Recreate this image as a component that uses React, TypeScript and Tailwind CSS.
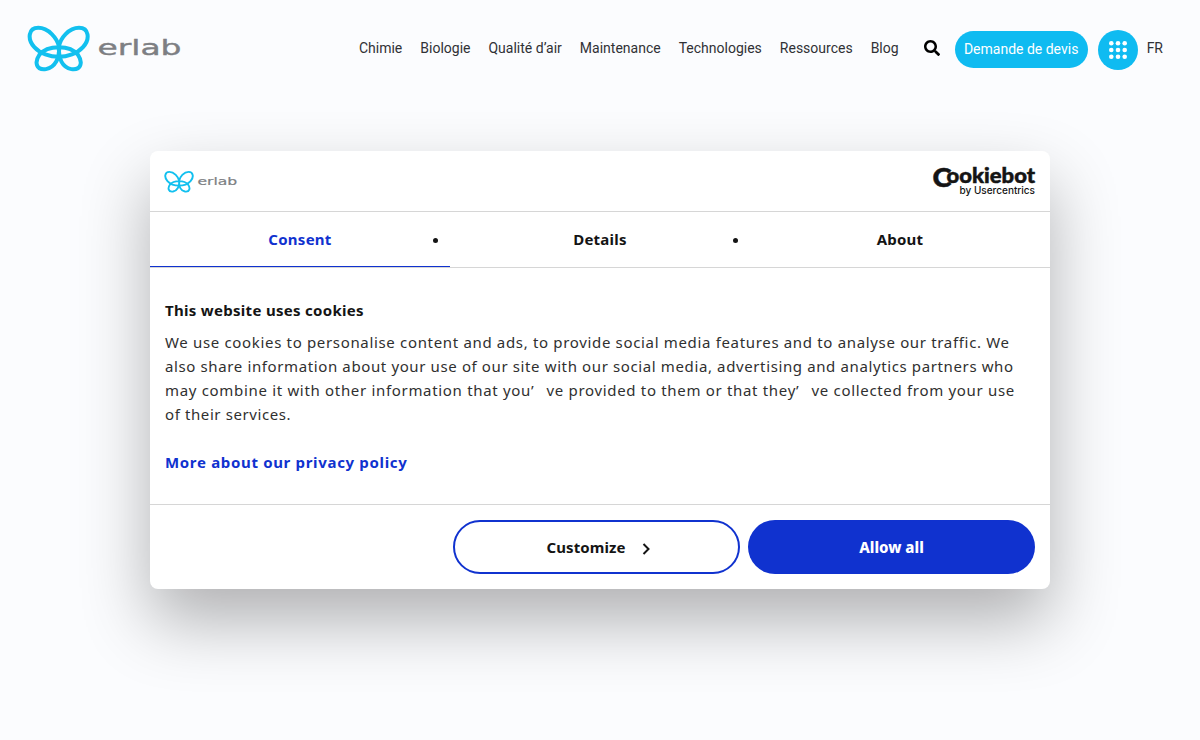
import { FaSearch } from "react-icons/fa";

const navItems = [
  "Chimie",
  "Biologie",
  "Qualité d’air",
  "Maintenance",
  "Technologies",
  "Ressources",
  "Blog",
];

function ErlabLogo({ className }: { className: string }) {
  return (
    <svg viewBox="0 0 156 48" className={className} aria-label="erlab">
      <g
        transform="translate(-7 -9.2) scale(0.3333)"
        fill="none"
        stroke="#12c0ef"
        strokeWidth="12"
        strokeLinejoin="round"
      >
        <path d="M117 96C112 70 85 39 55 39C25 39 21 73 43 97C60 116 90 126 116 126C142 126 172 116 189 97C211 73 207 39 177 39C147 39 120 70 117 96Z" />
        <path d="M117 96C120 130 105 158 78 163C48 167 43 142 58 120C72 102 95 97 117 97C139 97 160 102 174 120C189 142 184 167 154 163C127 158 114 130 117 96Z" />
      </g>
      <text
        x="70.5"
        y="31"
        fontSize="22"
        textLength="84"
        lengthAdjust="spacingAndGlyphs"
        strokeWidth="0.4"
        className="fill-[#7d7f83] stroke-[#7d7f83] font-['DejaVu_Sans',sans-serif]"
      >
        erlab
      </text>
    </svg>
  );
}

function CookiebotLogo() {
  return (
    <svg viewBox="0 0 104 32" className="h-8 w-26 overflow-visible fill-[#141414]">
      <g className="stroke-[#141414] font-['Lato',sans-serif] font-black" strokeWidth="0.5">
        <text x="0.5" y="21.8" fontSize="26.5" textLength="19" lengthAdjust="spacingAndGlyphs">
          C
        </text>
        <text x="14.5" y="17.8" fontSize="21.5" textLength="88.5" lengthAdjust="spacingAndGlyphs">
          ookiebot
        </text>
      </g>
      <text
        x="27.5"
        y="28.5"
        fontSize="10"
        textLength="75.5"
        lengthAdjust="spacingAndGlyphs"
        className="font-['Inter',sans-serif] font-medium"
      >
        by Usercentrics
      </text>
    </svg>
  );
}

function Header() {
  return (
    <header className="flex h-24 items-center pr-[37px] pl-[27px] font-['Roboto',sans-serif] text-sm text-[#303135]">
      <ErlabLogo className="h-12 w-[156px]" />
      <nav className="ml-auto flex gap-[18px]">
        {navItems.map((item) => (
          <a key={item}>{item}</a>
        ))}
      </nav>
      <FaSearch size={16} className="ml-[25px] text-black" />
      <button className="ml-[15px] mt-0.5 h-[37px] w-[133px] rounded-full bg-[#0fbbf1] text-white">
        Demande de devis
      </button>
      <button className="ml-2.5 mt-1 flex size-10 items-center justify-center rounded-full bg-[#0fbbf1]">
        <svg width="18" height="18" viewBox="0 0 18 18" fill="white">
          {[2.3, 9, 15.7].map((y) =>
            [2.3, 9, 15.7].map((x) => <circle key={`${x}-${y}`} cx={x} cy={y} r="2.3" />)
          )}
        </svg>
      </button>
      <span className="ml-[9px]">FR</span>
    </header>
  );
}

function Apostrophe() {
  return <span className="inline-block w-[15.5px]">’</span>;
}

function Tabs() {
  return (
    <div className="grid h-14 grid-cols-3 border-b border-[#d6d6d6] text-center font-bold tracking-[0.25px]">
      <div className="relative border-b border-b-[#1032cf] pt-[15px] text-[#1032cf]">
        Consent
        <i className="absolute top-[26px] right-3 size-[5px] rounded-full bg-[#141414]" />
      </div>
      <div className="relative pt-[15px]">
        Details
        <i className="absolute top-[26px] right-3 size-[5px] rounded-full bg-[#141414]" />
      </div>
      <div className="pt-[15px]">About</div>
    </div>
  );
}

function CookieDialog() {
  return (
    <div className="mx-auto mt-[55px] flex h-[438px] w-[900px] flex-col rounded-lg bg-white font-['Noto_Sans',sans-serif] text-[15px] leading-6 text-[#141414] shadow-[0_32px_68px_rgba(0,0,0,0.3)]">
      <div className="flex h-[61px] shrink-0 items-center justify-between border-b border-[#d6d6d6] pr-3.5 pl-[14px]">
        <ErlabLogo className="h-[23px] w-[74px]" />
        <CookiebotLogo />
      </div>
      <Tabs />
      <div className="h-[236px] px-[15px] pt-[30px] whitespace-nowrap">
        <h2 className="font-bold tracking-[0.3px]">This website uses cookies</h2>
        <div className="mt-2 text-[#303030]">
          <p className="tracking-[0.665px]">
            We use cookies to personalise content and ads, to provide social media features and to analyse our traffic. We
          </p>
          <p className="tracking-[0.62px]">
            also share information about your use of our site with our social media, advertising and analytics partners who
          </p>
          <p className="tracking-[0.68px]">
            may combine it with other information that you
            <Apostrophe />
            ve provided to them or that they
            <Apostrophe />
            ve collected from your use
          </p>
          <p className="tracking-[0.6px]">of their services.</p>
        </div>
        <a className="mt-6 block font-bold tracking-[0.67px] text-[#1032cf]">More about our privacy policy</a>
      </div>
      <div className="flex h-[85px] justify-end gap-2 border-t border-[#d6d6d6] px-[15px] pt-[15px] font-bold">
        <button className="flex h-[54px] w-[287px] items-center justify-center rounded-[27px] border-2 border-[#1032cf] pl-[3px] tracking-[0.1px]">
          Customize
          <svg width="8" height="12" viewBox="0 0 8 12" className="mt-[3px] ml-4" fill="none" stroke="#141414" strokeWidth="2">
            <path d="M1.5 1L6.5 6L1.5 11" />
          </svg>
        </button>
        <button className="h-[54px] w-[287px] rounded-[27px] bg-[#1032cf] font-extrabold text-white">Allow all</button>
      </div>
    </div>
  );
}

export default function App() {
  return (
    <div className="h-[740px] w-[1200px] overflow-hidden bg-[#fbfcfe]">
      <Header />
      <CookieDialog />
    </div>
  );
}
